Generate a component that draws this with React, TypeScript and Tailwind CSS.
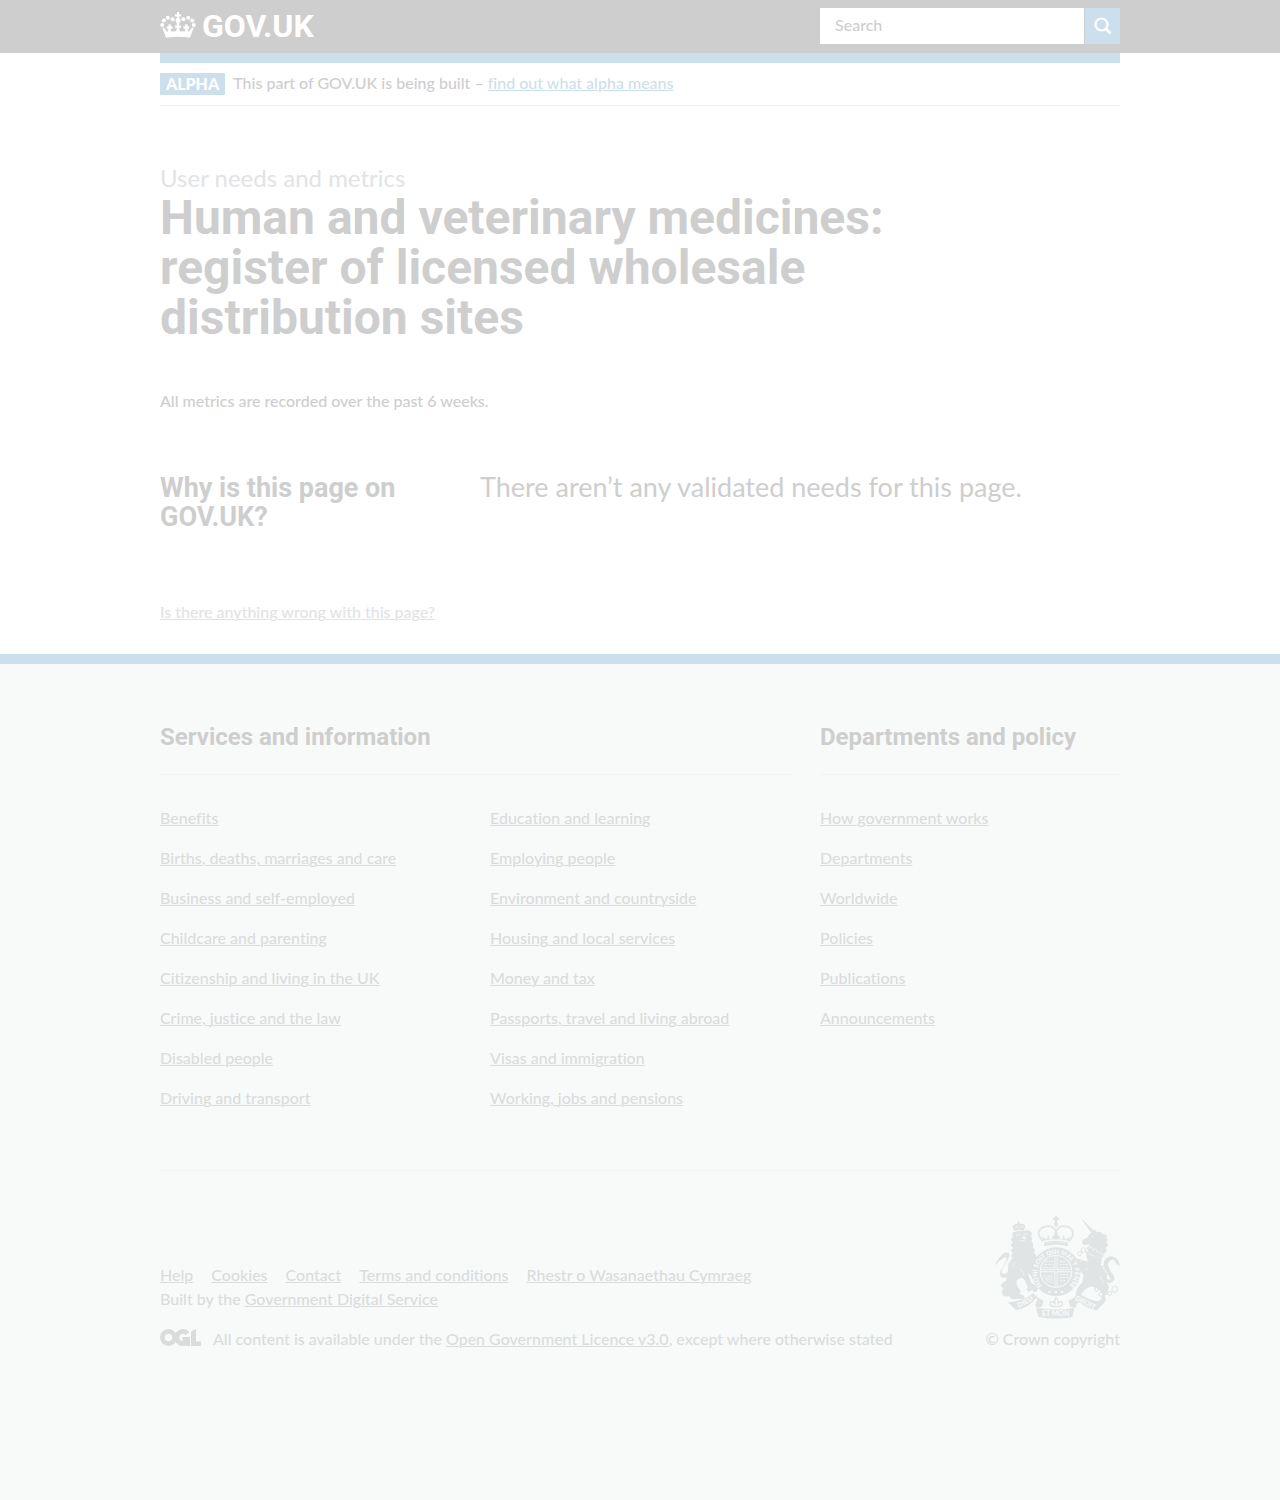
import React from "react";

const services = [
  [
    "Benefits",
    "Births, deaths, marriages and care",
    "Business and self-employed",
    "Childcare and parenting",
    "Citizenship and living in the UK",
    "Crime, justice and the law",
    "Disabled people",
    "Driving and transport",
  ],
  [
    "Education and learning",
    "Employing people",
    "Environment and countryside",
    "Housing and local services",
    "Money and tax",
    "Passports, travel and living abroad",
    "Visas and immigration",
    "Working, jobs and pensions",
  ],
];

const departments = [
  "How government works",
  "Departments",
  "Worldwide",
  "Policies",
  "Publications",
  "Announcements",
];

const metaLinks = ["Help", "Cookies", "Contact", "Terms and conditions", "Rhestr o Wasanaethau Cymraeg"];

function Link({ children }: { children: React.ReactNode }) {
  return (
    <a href="#" className="underline decoration-1 underline-offset-1">
      {children}
    </a>
  );
}

function LinkList({ items }: { items: string[] }) {
  return (
    <ul className="mt-[33px] flex flex-col gap-5">
      {items.map((item) => (
        <li key={item}>
          <Link>{item}</Link>
        </li>
      ))}
    </ul>
  );
}

function FooterHeading({ children }: { children: React.ReactNode }) {
  return (
    <h2 className="border-b border-[#f2f3f3] pt-0.5 pb-[22px] font-[Roboto,sans-serif] text-2xl leading-[30px] font-bold text-[#cecece]">
      {children}
    </h2>
  );
}

function CrownIcon() {
  return (
    <svg viewBox="0 0 36 28" className="mb-0.5 h-7 w-9" fill="white" aria-hidden="true">
      <path d="M17 1h2v2.200h2.200v2.200H19v1.600a2.600 2.600 0 0 1 .6 4.400L18.800 13h-1.600l-.8-1.600A2.600 2.600 0 0 1 17 7V5.400h-2.200V3.200H17z" />
      <circle cx="12.600" cy="8.200" r="2" />
      <circle cx="7.800" cy="6.800" r="2" />
      <circle cx="3.800" cy="9.500" r="2" />
      <circle cx="2.200" cy="14" r="2" />
      <circle cx="23.400" cy="8.200" r="2" />
      <circle cx="28.200" cy="6.800" r="2" />
      <circle cx="32.200" cy="9.500" r="2" />
      <circle cx="33.800" cy="14" r="2" />
      <path d="M2.200 16.500l2 .4 3.200 4.200 1-3.500-1.600.5v-3.200l1.800.8-.5-2.200h3.200l-.7 2.200 1.900-.8v3.200l-1.900-.6.7 3 4.700-.2 1.200-3.600-2 .6v-3.400l2.100.9-.8-2.500h3l-.8 2.500 2.100-.9v3.400l-2-.6 1.200 3.600 4.700.2.700-3-1.900.6v-3.200l1.900.8-.7-2.200h3.200l-.5 2.200 1.800-.8v3.200l-1.600-.5 1 3.500 3.200-4.200 2-.4-3.900 10.200q-11.900-2-23.800 0z" />
    </svg>
  );
}

function Lion() {
  return (
    <g>
      <path d="M102 77l-5-14q5-9 15-8l1-3v-4h5v4l2 3q12-2 16 7l-4 14q-15-4-30 1z" />
      <path d="M106 66l5-4 4 7m5-7 5 5 6-5" fill="none" stroke="#f8fafa" strokeWidth="2" />
      <path d="M101 81q15-7 31-4 15-5 22 3 4 7-2 12l5 7-3 8 6 9-2 9 6 8-1 10 7 9-3 12 3 14-6 8 1 12 8 12q2 14 9 16l-1 18-9-2-8-8-9-20-10-10-12 4-9 9-13 7-2 10 5 12 8 11-3 10 11 3 4 6-6 5H96l-10-9-9 2-9-6-3-9 5-10-8-8 7-10 8-3 4-13 3-20 1-18 7-12 6-8-5-6 5-7-6-9 8-7-8-8 6-9-6-9 7-7-3-11z" />
      <path d="M124 190q15 5 21 18l9 24 12 8 9 11-7 8-8 1-2-7-12 6-7-7 4-7-8-19-14-16z" />
      <path d="M91 207q-13 15-27 8-9-6 1-25l12-21q7-13-3-13l-17 11-12 14q3-13 13-23 10-16 23-17 12 3 6 14-3 10-12 21-11 16-9 26 9 10 21-5z" />
      <path d="M108 89l12-1m10 1 11-3M119 105l8 2 8-3M120 190q10 10 13 22M98 185l7-14" fill="none" stroke="#f8fafa" strokeWidth="2" />
      <path d="M127 94q7-1 11 1l-3 6q-5 1-7-2z" fill="#f8fafa" />
    </g>
  );
}

function Unicorn() {
  return (
    <g>
      <path d="M303 38l39 39-7 6q-18-21-32-45z" />
      <path d="M323 91l12-9 8-12 6 9 13 1 9 7 10 2-2 9 5 6-5 7 6 9-7 6 2 10-6 8-10 6q-20 3-40-17l4-17-13 4-9-5 3-12 16-9z" />
      <path d="M318 125l15-3 7 8 8-5 5 10 9-3 1 10 10 2-6 14-20-3-20-12z" />
      <path d="M318 121l8 8 7-6 6 12 9-5 4 11 9-2 3 9 9-2M315 136q20 20 51 22" fill="none" stroke="#f8fafa" strokeWidth="2" />
      <path d="M316 135l20 16 29 7-2 20 8 15 11 14-3 21 8 17-4 12-9 15 4 12-12 15h-18l4-10 11-7 5-17-13-15-21-7-16 7-14 16-5 22-13 11-16-4 2-9 13-9 7-28 15-18 4-20-9-16-9-12-16 3-13-5-2-13-6-15 2-6 10 8 15-1 8 7 13 1 7 5 13 2z" />
      <path d="M290 180l25-14 15 4-18 11-12 24-10 2 4-17z" />
      <path d="M306 160l-5 12m21 15-6 10m43 15 12 22" fill="none" stroke="#f8fafa" strokeWidth="2" />
      <path d="M371 222q18 21 31 3 5-9-9-25-12-19-7-29 8-12 18-5l6 11 8 5q2-14-11-25l-14-5-14 5q-14 15-4 35 10 15 16 29-1 8-20-9z" />
      <circle cx="337" cy="93" r="2" fill="#f8fafa" />
      <g fill="none" stroke="currentColor" strokeWidth="3">
        <circle cx="310" cy="134" r="7" />
        <circle cx="299" cy="145" r="6" />
        <circle cx="295" cy="174" r="6" />
        <circle cx="350" cy="252" r="6" />
        <circle cx="363" cy="267" r="6" />
        <circle cx="377" cy="262" r="6" />
        <circle cx="389" cy="264" r="6" />
        <circle cx="404" cy="252" r="9" />
        <circle cx="372" cy="188" r="6" />
      </g>
    </g>
  );
}

function Shield() {
  return (
    <g>
      <circle cx="228" cy="199" r="73" />
      <circle cx="228" cy="198" r="49" fill="#f8fafa" />
      <circle cx="228" cy="198" r="46" />
      <path d="M228 152v92M182 196h92" stroke="#f8fafa" strokeWidth="9" />
      <path d="M228 152v92M182 196h92" stroke="currentColor" strokeWidth="4" />
      <g stroke="#f8fafa" strokeWidth="3" strokeDasharray="6 3" fill="none">
        <path d="M196 168h24m-26 9h28m-32 9h32M240 168h18m-19 9h26m-26 9h28M240 208h26m-26 9h24m-24 9h18" />
      </g>
      <path d="M191 207q7 24 27 25M197 207q6 17 22 18M203 207q5 10 16 11M197 226l20-20" stroke="#f8fafa" strokeWidth="2" fill="none" />
      <path id="garter" d="M187 240A56 56 0 1 1 269 240" fill="none" />
      <text fontSize="19" fontWeight="900" fill="#f8fafa" fontFamily="Lato, sans-serif">
        <textPath href="#garter">HONI SOIT QUI MAL Y PENSE</textPath>
      </text>
      <path d="M205 260h46" stroke="#f8fafa" strokeWidth="6" strokeDasharray="7 12" />
    </g>
  );
}

function ImperialCrown() {
  return (
    <g>
      <path d="M225 32h6v5h6v8h-6v6l4 5-4 8h-6l-4-8 4-5v-6h-6v-8h6z" />
      <path d="M188 108q-17-21-10-32 12-17 38-12l9 10h6l9-10q27-5 37 12 7 11-10 32" fill="none" stroke="currentColor" strokeWidth="6" strokeDasharray="6 1" />
      <path d="M225 70h6v27h-6z" />
      <path d="M188 91l6 9 7 2 4-14 4 14 9-1-2-8 6-1 2-10h8l2 10 6 1-2 8 9 1 4-14 4 14 7-2 6-9v16q-40-10-80 0z" />
      <path d="M192 111q36-9 72 0l-1 12q-35-11-70 0z" />
      <path d="M199 114q29-6 58 0" fill="none" stroke="#f8fafa" strokeWidth="2" strokeDasharray="5 4" />
    </g>
  );
}

function Ribbon() {
  return (
    <g>
      <path d="M84 291q45-3 75-27l12 12q-25 32-63 39z" />
      <path d="M164 270q12 10 27 17l-6 17-15 4q-8-12 2-24z" />
      <path d="M374 291q-47-3-77-27l-12 12q25 32 65 39z" />
      <path d="M292 270q-12 10-27 17l6 17 15 4q8-12-2-24z" />
      <path d="M168 311l9-3q51 9 102 0l4 3-6 24q-49 9-101 0z" />
      <path d="M220 304q-14-4-8-14 9-3 13 8-4-11 3-22 9 11 5 22 3-11 13-8 5 10-9 14z" fill="none" stroke="currentColor" strokeWidth="4" />
      <g fontFamily="Lato, sans-serif" fontSize="21" fontWeight="900" fill="#f8fafa">
        <text x="186" y="333">ET MON</text>
        <text x="117" y="308" transform="rotate(-28 117 308)">DIEU</text>
        <text x="284" y="283" transform="rotate(27 284 283)">DROIT</text>
      </g>
    </g>
  );
}

function RoyalArms() {
  return (
    <svg viewBox="42 32 378 309" className="h-[103px] w-[126px] text-[#e1e4e4]" fill="currentColor" role="img" aria-label="Royal coat of arms">
      <Lion />
      <Unicorn />
      <Shield />
      <ImperialCrown />
      <Ribbon />
    </svg>
  );
}

function OglLogo() {
  return (
    <svg viewBox="0 0 41 17" className="h-[17px] w-[41px] shrink-0" fill="none" stroke="#dadcdc" role="img" aria-label="Open Government Licence">
      <circle cx="8.500" cy="8.500" r="6.100" strokeWidth="4.800" />
      <path d="M27.500 4.500A6.100 6.100 0 1 0 28 12" strokeWidth="4.800" />
      <path d="M22.500 8h7.500v9h-3.500v-4h-4z" fill="#dadcdc" stroke="none" />
      <path d="M31 2.500l5-2.500v12.500h5V17H31z" fill="#dadcdc" stroke="none" />
    </svg>
  );
}

export default function App() {
  return (
    <div className="flex min-h-screen flex-col bg-white font-[Lato,sans-serif] text-base leading-5 font-medium text-[#cecece] [font-variant-ligatures:none]">
      <header className="bg-[#cecece]">
        <div className="mx-auto flex max-w-[960px] items-center justify-between pt-2 pb-[9px]">
          <a href="#" className="flex items-center gap-1.5 font-[Roboto,sans-serif] text-[32px] leading-8 font-bold text-white">
            <CrownIcon />
            <span>GOV.UK</span>
          </a>
          <form className="flex h-9 w-75 gap-px" onSubmit={(e) => e.preventDefault()}>
            <input
              type="search"
              aria-label="Search"
              placeholder="Search"
              className="min-w-0 flex-1 bg-white px-[15px] pb-0.5 outline-none placeholder:text-[#cecece]"
            />
            <button type="submit" aria-label="Submit search" className="flex w-[35px] items-center justify-center bg-[#ccdfec]">
              <svg viewBox="0 0 18 18" className="size-4.5" fill="none" stroke="white" aria-hidden="true">
                <circle cx="7.500" cy="7.500" r="6" strokeWidth="2.200" />
                <path d="M12 12l4.500 4.500" strokeWidth="3" />
              </svg>
            </button>
          </form>
        </div>
      </header>

      <main className="mx-auto w-full max-w-[960px]">
        <div className="h-2.5 bg-[#ccdfec]" />
        <div className="flex items-start gap-2 border-b border-[#f2f3f3] py-2.5">
          <strong className="bg-[#ccdfec] px-1.5 leading-[22px] font-black text-white">ALPHA</strong>
          <p>
            This part of GOV.UK is being built –{" "}
            <span className="text-[#ccdfec]"><Link>find out what alpha means</Link></span>
          </p>
        </div>
        <p className="mt-[57px] mb-px text-2xl leading-[29px] font-normal text-[#e2e3e5]">User needs and metrics</p>
        <h1 className="max-w-[780px] font-[Roboto,sans-serif] text-5xl leading-[50px] font-bold">
          Human and veterinary medicines: register of licensed wholesale distribution sites
        </h1>
        <p className="mt-12">All metrics are recorded over the past 6 weeks.</p>
        <section className="mt-[61px] grid grid-cols-3 items-baseline text-[27px] leading-[29px]">
          <h2 className="pr-15 font-[Roboto,sans-serif] font-bold">Why is this page on GOV.UK?</h2>
          <p className="col-span-2 font-normal">There aren’t any validated needs for this page.</p>
        </section>
        <p className="mt-[70px] mb-8 text-[#e2e3e5]"><Link>Is there anything wrong with this page?</Link></p>
      </main>

      <footer className="flex-1 border-t-10 border-[#ccdfec] bg-[#f8fafa] text-[#dadcdc]">
        <div className="mx-auto max-w-[960px] pt-14">
          <div className="grid grid-cols-[632px_300px] gap-7 border-b border-[#f2f3f3] pb-[62px]">
            <section>
              <FooterHeading>Services and information</FooterHeading>
              <div className="grid grid-cols-2 gap-7">
                {services.map((items) => <LinkList key={items[0]} items={items} />)}
              </div>
            </section>
            <section>
              <FooterHeading>Departments and policy</FooterHeading>
              <LinkList items={departments} />
            </section>
          </div>
          <div className="flex items-end justify-between pt-[45px]">
            <div>
              <ul className="flex gap-[18px] leading-6">
                {metaLinks.map((item) => <li key={item}><Link>{item}</Link></li>)}
              </ul>
              <p className="leading-6">Built by the <Link>Government Digital Service</Link></p>
              <div className="mt-[18px] flex gap-3">
                <OglLogo />
                <p>All content is available under the <Link>Open Government Licence v3.0</Link>, except where otherwise stated</p>
              </div>
            </div>
            <div className="flex flex-col items-end gap-2.5">
              <RoyalArms />
              <a href="#">© Crown copyright</a>
            </div>
          </div>
        </div>
      </footer>
    </div>
  );
}
